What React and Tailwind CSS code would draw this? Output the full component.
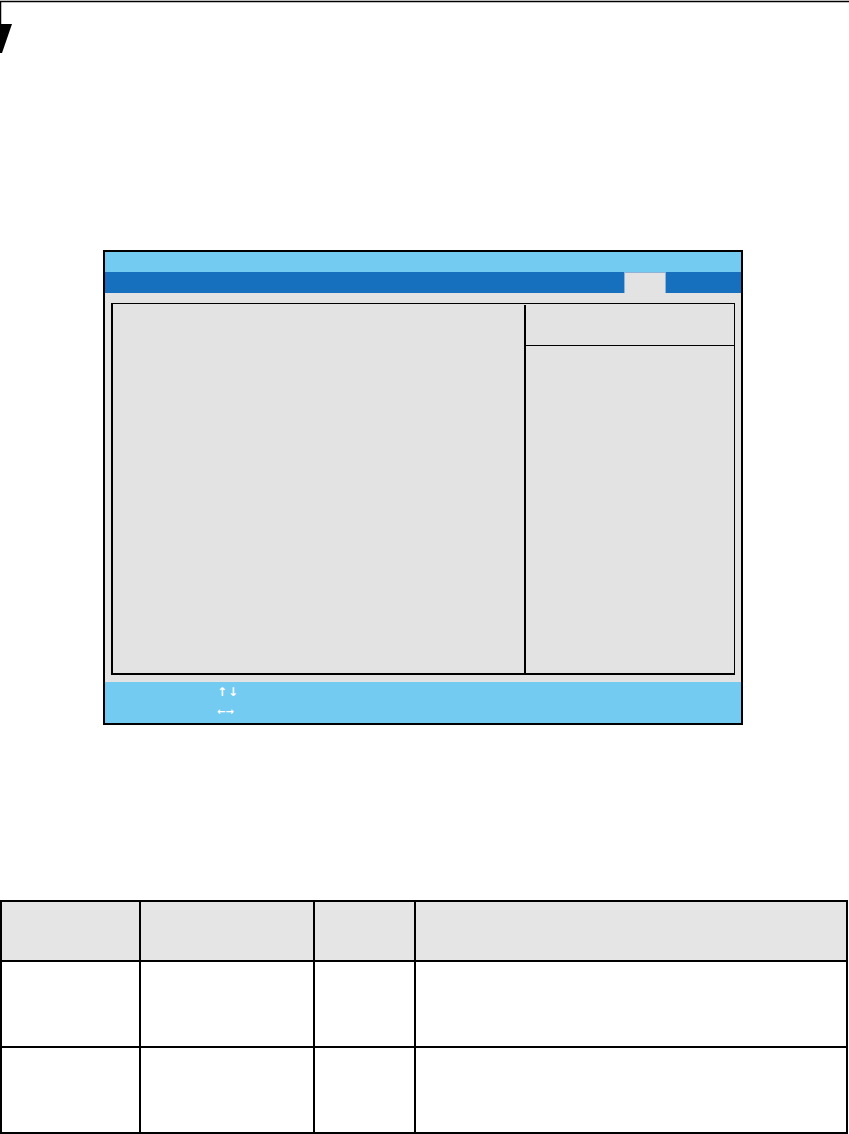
import React from 'react';

// Page header mark: rule along the top, short left rule and the black wedge
const PageMark = () => (
  <svg width="849" height="54" viewBox="0 0 849 54" className="block">
    <line x1="0" y1="1.5" x2="849" y2="1.5" stroke="#000" strokeWidth="1.5" />
    <line x1="0.5" y1="1" x2="0.5" y2="25" stroke="#000" strokeWidth="1.5" />
    <polygon points="0,24 12,24 2,53 0,53" fill="#000" />
  </svg>
);

const BiosScreen = () => (
  <div className="ml-[103px] w-[640px] border-2 border-black bg-[#e3e3e3] flex flex-col">
    {/* title bar */}
    <div className="h-[20px] bg-[#74cbf2]" />
    {/* menu bar with the active tab */}
    <div className="h-[21px] bg-[#1770be] flex">
      <div className="w-[519px]" />
      <div className="w-[42px] bg-[#e3e3e3] border-x border-t border-[#8fb3d6]" />
    </div>
    {/* body */}
    <div className="pt-[10px] pl-[6px] pr-[6px] pb-[7px]">
      <div className="h-[372px] flex border-t border-r border-l-2 border-b-2 border-black">
        <div className="w-[411px]" />
        <div className="mt-[1px] w-[2px] bg-black" />
        <div className="flex-1 flex flex-col">
          <div className="h-[42px] border-b border-black" />
          <div className="flex-1" />
        </div>
      </div>
    </div>
    {/* key legend */}
    <div
      className="h-[41px] bg-[#74cbf2] pl-[112px] pt-[1px] flex flex-col text-white text-[12px] font-bold leading-[19px]"
      style={{ fontFamily: '"DejaVu Sans", "Liberation Sans", sans-serif' }}
    >
      <span className="tracking-[1px]">↑↓</span>
      <span className="text-[10px]">←→</span>
    </div>
  </div>
);

const rows = [
  { h: 'h-[60px]', bg: 'bg-[#e5e5e5]' },
  { h: 'h-[86px]', bg: 'bg-white' },
  { h: 'h-[86px]', bg: 'bg-white' },
];

const SettingsTable = () => (
  <div className="w-[848px] border-t-2 border-l-2 border-black">
    {rows.map((r, i) => (
      <div key={i} className={`grid grid-cols-[139px_174px_101px_1fr] border-b-2 border-black ${r.h} ${r.bg}`}>
        <div className="border-r-2 border-black" />
        <div className="border-r-2 border-black" />
        <div className="border-r-2 border-black" />
        <div className="border-r-2 border-black" />
      </div>
    ))}
  </div>
);

export default function App() {
  return (
    <div className="w-[849px] h-[1134px] bg-white overflow-hidden">
      <PageMark />
      <div className="h-[196px]" />
      <BiosScreen />
      <div className="h-[175px]" />
      <SettingsTable />
    </div>
  );
}
